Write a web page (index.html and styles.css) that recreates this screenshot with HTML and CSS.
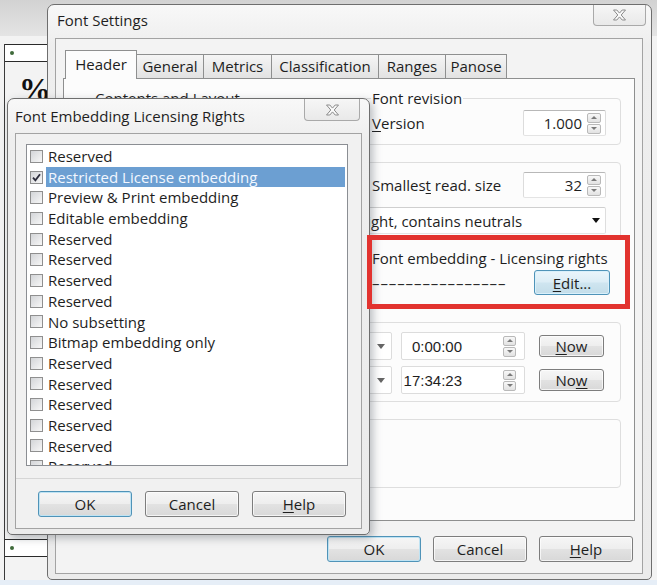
FILE: index.html
```html
<!DOCTYPE html>
<html lang="en">
<head>
<meta charset="utf-8">
<title>Font Settings</title>
<link rel="stylesheet" href="styles.css">
</head>
<body>
<div class="desktop">
  <div class="bg-top"></div>
  <div class="bg-middle">
    <div class="sheet">
      <div class="sheet-row"><span class="dot"></span></div>
      <div class="pct">%</div>
      <div class="sheet-row sheet-low"><span class="dot"></span></div>
    </div>
  </div>
  <div class="bg-bottom"></div>

  <section class="win main-win">
    <div class="titlebar">
      <span class="title">Font Settings</span>
      <span class="close-btn"><svg width="15" height="12" viewBox="0 0 15 12"><polygon points="1.5,1 4.8,1 7.5,4.1 10.2,1 13.5,1 9.2,6 13.5,11 10.2,11 7.5,7.9 4.8,11 1.5,11 5.8,6" fill="#fbfbfb" stroke="#8a8a8a" stroke-width="1" stroke-linejoin="round"/></svg></span>
    </div>
    <div class="client">
      <div class="tabs">
        <span class="tab active">Header</span>
        <span class="tab">General</span>
        <span class="tab">Metrics</span>
        <span class="tab">Classification</span>
        <span class="tab">Ranges</span>
        <span class="tab">Panose</span>
      </div>
      <div class="page">
        <fieldset class="grp">
          <legend>Contents and Layout</legend>
          <div class="label-row"></div>
        </fieldset>
        <fieldset class="grp">
          <legend>Font revision</legend>
          <div class="label-row">
            <span><u>V</u>ersion</span>
            <span class="spin"><span class="spin-val">1.000</span><span class="spin-btns"><i class="sb up"></i><i class="sb down"></i></span></span>
          </div>
        </fieldset>
        <div class="box g2">
          <div class="label-row col2">
            <span>Smalles<u>t</u> read. size</span>
            <span class="spin"><span class="spin-val">32</span><span class="spin-btns"><i class="sb up"></i><i class="sb down"></i></span></span>
          </div>
          <div class="dir-row">
            <span class="dir-label"></span>
            <span class="combo"><span class="combo-text">Only strongly left to right, contains neutrals</span><span class="combo-arrow"></span></span>
          </div>
        </div>
        <div class="embed">
          <div class="embed-title">Font embedding - Licensing rights</div>
          <div class="embed-row">
            <span class="dashes">––––––––––––––––</span>
            <button class="btn edit"><u>E</u>dit...</button>
          </div>
        </div>
        <div class="box g3">
          <div class="time-row">
            <span class="t-label"></span>
            <span class="date-combo"><span class="date-text"></span><span class="dd"></span></span>
            <span class="timebox"><span class="time-text">0:00:00</span><span class="spin-btns"><i class="sb up"></i><i class="sb down"></i></span></span>
            <button class="btn now"><u>N</u>ow</button>
          </div>
          <div class="time-row">
            <span class="t-label"></span>
            <span class="date-combo"><span class="date-text"></span><span class="dd"></span></span>
            <span class="timebox"><span class="time-text">17:34:23</span><span class="spin-btns"><i class="sb up"></i><i class="sb down"></i></span></span>
            <button class="btn now">No<u>w</u></button>
          </div>
        </div>
        <div class="box g4"></div>
      </div>
      <div class="btnrow">
        <button class="btn dflt">OK</button>
        <button class="btn">Cancel</button>
        <button class="btn"><u>H</u>elp</button>
      </div>
    </div>
  </section>

  <section class="win dlg">
    <div class="titlebar dlg-bar">
      <span class="title">Font Embedding Licensing Rights</span>
      <span class="close-btn"><svg width="15" height="12" viewBox="0 0 15 12"><polygon points="1.5,1 4.8,1 7.5,4.1 10.2,1 13.5,1 9.2,6 13.5,11 10.2,11 7.5,7.9 4.8,11 1.5,11 5.8,6" fill="#fbfbfb" stroke="#8a8a8a" stroke-width="1" stroke-linejoin="round"/></svg></span>
    </div>
    <div class="client dlg-client">
      <div class="list">
        <div class="item"><span class="cb"></span><span class="txt">Reserved</span></div>
        <div class="item"><span class="cb"><svg width="11" height="11" viewBox="0 0 11 11"><path d="M2 5.6 L4.4 8.4 L9 2.2" fill="none" stroke="#2b2b3a" stroke-width="1.8"/></svg></span><span class="txt sel">Restricted License embedding</span></div>
        <div class="item"><span class="cb"></span><span class="txt">Preview &amp; Print embedding</span></div>
        <div class="item"><span class="cb"></span><span class="txt">Editable embedding</span></div>
        <div class="item"><span class="cb"></span><span class="txt">Reserved</span></div>
        <div class="item"><span class="cb"></span><span class="txt">Reserved</span></div>
        <div class="item"><span class="cb"></span><span class="txt">Reserved</span></div>
        <div class="item"><span class="cb"></span><span class="txt">Reserved</span></div>
        <div class="item"><span class="cb"></span><span class="txt">No subsetting</span></div>
        <div class="item"><span class="cb"></span><span class="txt">Bitmap embedding only</span></div>
        <div class="item"><span class="cb"></span><span class="txt">Reserved</span></div>
        <div class="item"><span class="cb"></span><span class="txt">Reserved</span></div>
        <div class="item"><span class="cb"></span><span class="txt">Reserved</span></div>
        <div class="item"><span class="cb"></span><span class="txt">Reserved</span></div>
        <div class="item"><span class="cb"></span><span class="txt">Reserved</span></div>
        <div class="item"><span class="cb"></span><span class="txt">Reserved</span></div>
      </div>
      <div class="dlg-foot">
        <button class="btn dflt">OK</button>
        <button class="btn">Cancel</button>
        <button class="btn"><u>H</u>elp</button>
      </div>
    </div>
  </section>

  <div class="annot"></div>
</div>
</body>
</html>
```
FILE: styles.css
```css
* { box-sizing: border-box; }
html, body { margin: 0; padding: 0; }
body {
  width: 657px;
  height: 585px;
  overflow: hidden;
  font-family: "Open Sans", "Noto Sans", sans-serif;
  font-size: 15px;
  color: #1e1e1e;
  background: #ececec;
}
u { text-decoration: underline; text-underline-offset: 2px; }
button { font: inherit; color: inherit; margin: 0; }

/* ---------- desktop backdrop ---------- */
.desktop {
  position: relative;
  width: 657px;
  height: 585px;
  overflow: hidden;
  display: flex;
  flex-direction: column;
  background: #eeeeee;
}
.bg-top {
  height: 36px;
  background: linear-gradient(#d2d2d2, #e4e4e4);
}
.bg-middle {
  flex: 1;
  display: flex;
  padding-top: 8px;
  background: #f3f3f3;
}
.sheet {
  margin-left: 4px;
  width: 70px;
  border-left: 1px solid #3a3a3a;
  display: flex;
  flex-direction: column;
}
.sheet-row {
  height: 18px;
  border-top: 1px solid #2a2a2a;
  border-bottom: 1px solid #2a2a2a;
  background: #fff;
  display: flex;
  align-items: center;
  padding-left: 5px;
}
.dot {
  width: 4px;
  height: 4px;
  border-radius: 50%;
  background: #3f6a3a;
}
.pct {
  margin: 12px 0 0 14px;
  font-family: "Liberation Serif", serif;
  font-weight: bold;
  font-size: 32px;
  line-height: 30px;
  color: #111;
}
.sheet-low { margin-top: auto; margin-bottom: 23px; }
.bg-bottom {
  height: 5px;
  background: #e6eef7;
}

/* ---------- windows ---------- */
.win {
  position: absolute;
  display: flex;
  flex-direction: column;
  border: 1px solid #6e6e6e;
  border-radius: 7px 7px 5px 5px;
  background: linear-gradient(#f8f8f8, #eeeeee 40px, #ebebeb);
}
.main-win {
  left: 47px;
  top: 4px;
  width: 605px;
  height: 576px;
}
.dlg {
  left: 7px;
  top: 98px;
  width: 363px;
  height: 437px;
  box-shadow: 3px 3px 8px rgba(60, 70, 80, 0.35);
}
.titlebar {
  height: 33px;
  flex: none;
  display: flex;
  align-items: flex-start;
  padding-left: 9px;
}
.title {
  line-height: 30px;
  color: #1f1f1f;
}
.close-btn {
  margin-left: auto;
  margin-right: 5px;
  width: 53px;
  height: 21px;
  border: 1px solid #a9a9a9;
  border-top: none;
  border-radius: 0 0 4px 4px;
  background: linear-gradient(#f6f6f6, #e9e9e9);
  display: flex;
  align-items: center;
  justify-content: center;
}
.dlg-bar { height: 34px; padding-left: 7px; }
.dlg-bar .title { line-height: 34px; }
.dlg-bar .close-btn { width: 56px; height: 22px; margin-right: 9px; }

.client {
  flex: 1;
  margin: 0 8px 5px 7px;
  border: 1px solid #a3a3a3;
  background: #f3f3f3;
  display: flex;
  flex-direction: column;
  padding: 11px 7px 11px 7px;
}

/* ---------- tabs ---------- */
.tabs {
  height: 28px;
  flex: none;
  display: flex;
  align-items: flex-end;
  padding-left: 2px;
}
.tab {
  flex: none;
  height: 24px;
  line-height: 22px;
  padding: 0;
  text-align: center;
  border: 1px solid #8e8f8f;
  border-bottom: none;
  margin-left: -1px;
  background: linear-gradient(#f5f5f5, #e2e2e2);
  white-space: nowrap;
}
.tab:nth-child(2) { width: 68px; }
.tab:nth-child(3) { width: 69px; }
.tab:nth-child(4) { width: 108px; }
.tab:nth-child(5) { width: 68px; }
.tab:nth-child(6) { width: 62px; }
.tab.active {
  width: 72px;
  height: 29px;
  margin-bottom: -1px;
  margin-left: 0;
  padding-top: 2px;
  background: #fcfcfc;
  position: relative;
  z-index: 1;
}

/* ---------- tab page ---------- */
.page {
  flex: 1;
  border: 1px solid #8e8f8f;
  background: #fcfcfc;
  display: grid;
  grid-template-columns: 269px 258px;
  column-gap: 8px;
  align-content: start;
  padding: 10px 13px 0 22px;
}
.grp {
  margin: 0;
  min-width: 0;
  border: 1px solid #dedede;
  border-radius: 4px;
  padding: 2px 14px 8px 8px;
}
.grp legend {
  padding: 0 1px;
  margin-left: -1px;
  line-height: 19px;
}
.label-row {
  height: 26px;
  display: flex;
  align-items: center;
  justify-content: space-between;
  white-space: nowrap;
}
.spin {
  width: 83px;
  height: 26px;
  display: flex;
  align-items: center;
  border: 1px solid;
  border-color: #b8b8b8 #dcdcdc #e4e4e4 #dcdcdc;
  border-radius: 2px;
  background: #fff;
  padding-right: 4px;
}
.spin-val {
  flex: 1;
  text-align: right;
  padding-right: 5px;
}
.spin-btns {
  width: 14px;
  display: flex;
  flex-direction: column;
  gap: 1px;
}
.sb {
  height: 10px;
  border: 1px solid #b9b9b9;
  border-radius: 2px;
  background: linear-gradient(#f8f8f8, #e2e2e2);
  display: flex;
  align-items: center;
  justify-content: center;
}
.sb::after {
  content: "";
  border-left: 3px solid transparent;
  border-right: 3px solid transparent;
}
.sb.up::after { border-bottom: 3px solid #7a7a7a; }
.sb.down::after { border-top: 3px solid #7a7a7a; }

.box {
  grid-column: 1 / -1;
  border: 1px solid #dedede;
  border-radius: 4px;
}
.g2 {
  margin-top: 17px;
  padding: 9px 14px 5px 8px;
  display: grid;
  grid-template-columns: 269px 1fr;
  column-gap: 8px;
}
.col2 { grid-column: 2; }
.dir-row {
  grid-column: 1 / -1;
  margin-top: 9px;
  display: flex;
  gap: 8px;
  align-items: center;
}
.dir-label { width: 111px; flex: none; }
.combo {
  flex: 1;
  min-width: 0;
  height: 27px;
  display: flex;
  align-items: center;
  border: 1px solid;
  border-color: #cfcfcf #dedede #e4e4e4 #dedede;
  border-radius: 2px;
  background: #fff;
  padding-right: 5px;
}
.combo-text {
  flex: 1;
  padding-left: 5px;
  white-space: nowrap;
  overflow: hidden;
}
.combo-arrow {
  border-left: 4px solid transparent;
  border-right: 4px solid transparent;
  border-top: 5px solid #111;
}

.embed {
  grid-column: 2;
  margin-top: 9px;
  padding: 0 11px 0 9px;
}
.embed-title { line-height: 19px; white-space: nowrap; }
.embed-row {
  margin-top: 2px;
  display: flex;
  align-items: center;
  justify-content: space-between;
}
.dashes {
  letter-spacing: 0.9px;
  color: #2a2a2a;
  white-space: nowrap;
}

.g3 {
  margin-top: 27px;
  padding: 9px 16px 7px 8px;
  display: flex;
  flex-direction: column;
  gap: 6px;
}
.time-row {
  height: 28px;
  display: flex;
  align-items: center;
}
.t-label { width: 120px; flex: none; }
.date-combo {
  margin-left: 8px;
  width: 169px;
  height: 28px;
  display: flex;
  align-items: center;
  border: 1px solid #dcdcdc;
  border-radius: 2px;
  background: #fff;
  padding: 0 6px 0 5px;
}
.date-text { flex: 1; }
.dd {
  border-left: 4px solid transparent;
  border-right: 4px solid transparent;
  border-top: 5px solid #666;
}
.timebox {
  margin-left: 9px;
  width: 124px;
  height: 28px;
  display: flex;
  align-items: center;
  border: 1px solid #dcdcdc;
  border-radius: 2px;
  background: #fff;
  padding-right: 8px;
}
.time-text {
  width: 60px;
  text-align: right;
  font-family: "Liberation Sans", Arial, sans-serif;
  font-size: 15px;
}
.timebox .spin-btns { margin-left: auto; width: 13px; }
.g4 {
  margin-top: 17px;
  height: 69px;
}

/* ---------- buttons ---------- */
.btn {
  width: 94px;
  height: 26px;
  padding: 0;
  border: 1px solid #7d7d7d;
  border-radius: 3px;
  background: linear-gradient(#f6f6f6, #eeeeee 48%, #e2e2e2 52%, #d8d8d8);
  box-shadow: inset 0 0 0 1px rgba(255,255,255,0.7);
  line-height: 22px;
}
.btn.dflt {
  border-color: #4f93b8;
  box-shadow: inset 0 0 0 1px #bfe3f3;
}
.btn.edit {
  width: 76px;
  height: 25px;
  border-color: #4f93b8;
  background: linear-gradient(#eaf5fb, #dcedf6 48%, #cfe5f0 52%, #c3dde9);
  box-shadow: inset 0 0 0 1px #d9f0fb;
}
.btn.now { width: 65px; height: 22px; margin-left: auto; line-height: 18px; }
.btnrow {
  flex: none;
  margin-top: 15px;
  display: flex;
  justify-content: flex-end;
  gap: 12px;
  padding-right: 2px;
}

/* ---------- dialog list ---------- */
.dlg-client {
  margin: 0 7px 5px 7px;
  padding: 10px 13px 0 10px;
  background: #f1f1f1;
}
.list {
  height: 322px;
  flex: none;
  border: 1px solid #8b8e93;
  background: #fff;
  overflow: hidden;
  padding-top: 1px;
}
.item {
  height: 20.7px;
  display: flex;
  align-items: center;
  padding-left: 3px;
  white-space: nowrap;
}
.cb {
  width: 13px;
  height: 13px;
  flex: none;
  border: 1px solid #8f8f8f;
  background: linear-gradient(135deg, #d3d5d8, #f7f7f7);
  display: flex;
  align-items: center;
  justify-content: center;
}
.txt {
  flex: 1;
  margin-left: 3px;
  margin-right: 2px;
  padding-left: 2px;
  line-height: 20.7px;
}
.txt.sel {
  background: #6c9fd2;
  color: #f2f7ff;
}
.dlg-foot {
  margin: 12px -13px 0 -10px;
  border-top: 1px solid #d6d6d6;
  padding: 12px 15px 11px 22px;
  display: flex;
  justify-content: flex-end;
  gap: 13px;
}

/* ---------- annotation ---------- */
.annot {
  position: absolute;
  left: 367px;
  top: 235px;
  width: 263px;
  height: 74px;
  border: 5px solid #e2332f;
}
```
